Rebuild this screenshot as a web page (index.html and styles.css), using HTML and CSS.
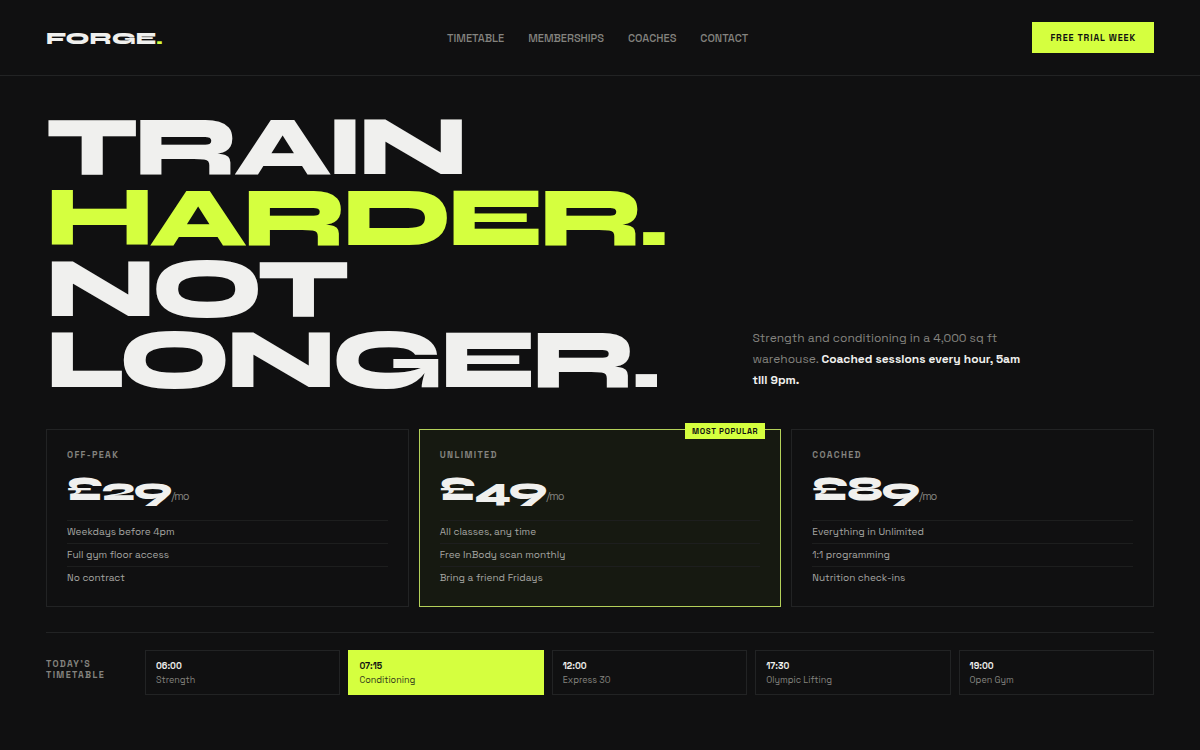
FILE: index.html
```html
<!DOCTYPE html>
<html lang="en">
<head>
  <meta charset="UTF-8" />
  <meta name="viewport" content="width=device-width, initial-scale=1" />
  <title>Forge.</title>
  <link rel="stylesheet" href="styles.css">
</head>
<body>

  <header class="topbar">
    <a class="logo" href="#">FORGE<span>.</span></a>
    <nav class="nav">
      <a href="#timetable">Timetable</a>
      <a href="#memberships">Memberships</a>
      <a href="#">Coaches</a>
      <a href="#">Contact</a>
    </nav>
    <button class="btn-trial">Free trial week</button>
  </header>

  <main>
    <section class="hero">
      <h1>Train<br><em>Harder.</em><br>Not<br>Longer.</h1>
      <p>Strength and conditioning in a 4,000 sq ft warehouse. <strong>Coached sessions every hour, 5am till 9pm.</strong></p>
    </section>

    <section class="plans" id="memberships">
      <article class="plan">
        <h2>Off-peak</h2>
        <div class="price">£29<span>/mo</span></div>
        <ul>
          <li>Weekdays before 4pm</li>
          <li>Full gym floor access</li>
          <li>No contract</li>
        </ul>
      </article>
      <article class="plan featured">
        <div class="badge">Most popular</div>
        <h2>Unlimited</h2>
        <div class="price">£49<span>/mo</span></div>
        <ul>
          <li>All classes, any time</li>
          <li>Free InBody scan monthly</li>
          <li>Bring a friend Fridays</li>
        </ul>
      </article>
      <article class="plan">
        <h2>Coached</h2>
        <div class="price">£89<span>/mo</span></div>
        <ul>
          <li>Everything in Unlimited</li>
          <li>1:1 programming</li>
          <li>Nutrition check-ins</li>
        </ul>
      </article>
    </section>

    <section class="timetable" id="timetable">
      <h2>Today's timetable</h2>
      <ul class="slots">
        <li><strong>06:00</strong><span>Strength</span></li>
        <li class="active"><strong>07:15</strong><span>Conditioning</span></li>
        <li><strong>12:00</strong><span>Express 30</span></li>
        <li><strong>17:30</strong><span>Olympic Lifting</span></li>
        <li><strong>19:00</strong><span>Open Gym</span></li>
      </ul>
    </section>
  </main>

</body>
</html>
```

FILE: styles.css
```css
:root {
  --bg: #101011;
  --text: #f0f0ee;
  --muted: #84837f;
  --soft: #a5a5a1;
  --line: #222324;
  --lime: #d5ff3f;
  --display: Syne, "DejaVu Sans", sans-serif;
  --body: "Space Grotesk", Inter, sans-serif;
}

* { box-sizing: border-box; }

body {
  margin: 0;
  background: var(--bg);
  color: var(--text);
  font-family: var(--body);
}

h1, h2, p, ul {
  margin: 0;
  padding: 0;
}

ul { list-style: none; }

a {
  color: inherit;
  text-decoration: none;
}

/* header */
.topbar {
  display: flex;
  justify-content: space-between;
  align-items: center;
  padding: 22px 46px;
  border-bottom: 1px solid var(--line);
}

.logo {
  font-family: var(--display);
  font-size: 18px;
  font-weight: 800;
  line-height: 24px;
}
.logo span { color: var(--lime); }

.nav {
  display: flex;
  gap: 24px;
  font-size: 11px;
  font-weight: 500;
  text-transform: uppercase;
  color: var(--muted);
}
.nav a:hover { color: var(--text); }

.btn-trial {
  height: 31px;
  padding: 0 18px;
  border: none;
  background: var(--lime);
  color: #101011;
  font-family: var(--body);
  font-size: 9px;
  font-weight: 700;
  letter-spacing: 0.1em;
  text-transform: uppercase;
  cursor: pointer;
}

main { padding: 35px 46px 55px; }

/* hero */
.hero {
  display: grid;
  grid-template-columns: 1.6fr 1fr;
  gap: 64px;
  align-items: end;
  margin-bottom: 34px;
}

.hero h1 {
  font-family: var(--display);
  font-size: 84px;
  font-weight: 800;
  line-height: 71px;
  letter-spacing: -4px;
  text-transform: uppercase;
}
.hero h1 em {
  font-style: normal;
  color: var(--lime);
}

.hero p {
  max-width: 276px;
  padding-bottom: 4px;
  font-size: 12px;
  line-height: 21px;
  color: var(--muted);
}
.hero p strong {
  font-weight: 600;
  color: var(--text);
}

/* plans */
.plans {
  display: grid;
  grid-template-columns: repeat(3, 1fr);
  gap: 10px;
  margin-bottom: 25px;
}

.plan {
  position: relative;
  padding: 20px 20px 17px;
  border: 1px solid var(--line);
}
.plan.featured {
  background: #161911;
  border-color: #b4d05a;
}

.plan h2,
.timetable h2 {
  font-size: 9px;
  font-weight: 600;
  line-height: 11px;
  letter-spacing: 0.15em;
  text-transform: uppercase;
  color: var(--muted);
}

.badge {
  position: absolute;
  top: -7px;
  right: 15px;
  padding: 0 7px;
  background: var(--lime);
  color: #101011;
  font-size: 8px;
  font-weight: 700;
  line-height: 16px;
  letter-spacing: 0.08em;
  text-transform: uppercase;
}

.price {
  margin: 11px 0 13px;
  font-family: var(--display);
  font-size: 33px;
  font-weight: 800;
  line-height: 35px;
  letter-spacing: -1px;
}
.price span {
  font-family: var(--body);
  font-size: 11px;
  font-weight: 400;
  line-height: 11px;
  color: var(--muted);
}

.plan li {
  padding: 4px 0;
  border-top: 1px solid #1d1e1e;
  font-size: 10px;
  line-height: 14px;
  color: var(--soft);
}

/* timetable */
.timetable {
  display: grid;
  grid-template-columns: 80px 1fr;
  gap: 19px;
  align-items: center;
  padding-top: 17px;
  border-top: 1px solid var(--line);
}
.timetable h2 { padding-bottom: 6px; }

.slots {
  display: grid;
  grid-template-columns: repeat(5, 1fr);
  gap: 8px;
}
.slots li {
  display: flex;
  flex-direction: column;
  padding: 8px 10px 7px;
  border: 1px solid var(--line);
  font-size: 9px;
  line-height: 14px;
  color: var(--muted);
}
.slots strong {
  font-weight: 700;
  color: var(--text);
}
.slots .active {
  background: var(--lime);
  border-color: var(--lime);
  color: #33391c;
}
.slots .active strong { color: #101011; }

@media (max-width: 760px) {
  .nav { display: none; }
  .hero, .plans, .slots, .timetable { grid-template-columns: 1fr; }
  .hero h1 { font-size: 48px; line-height: 44px; letter-spacing: -2px; }
}
```
